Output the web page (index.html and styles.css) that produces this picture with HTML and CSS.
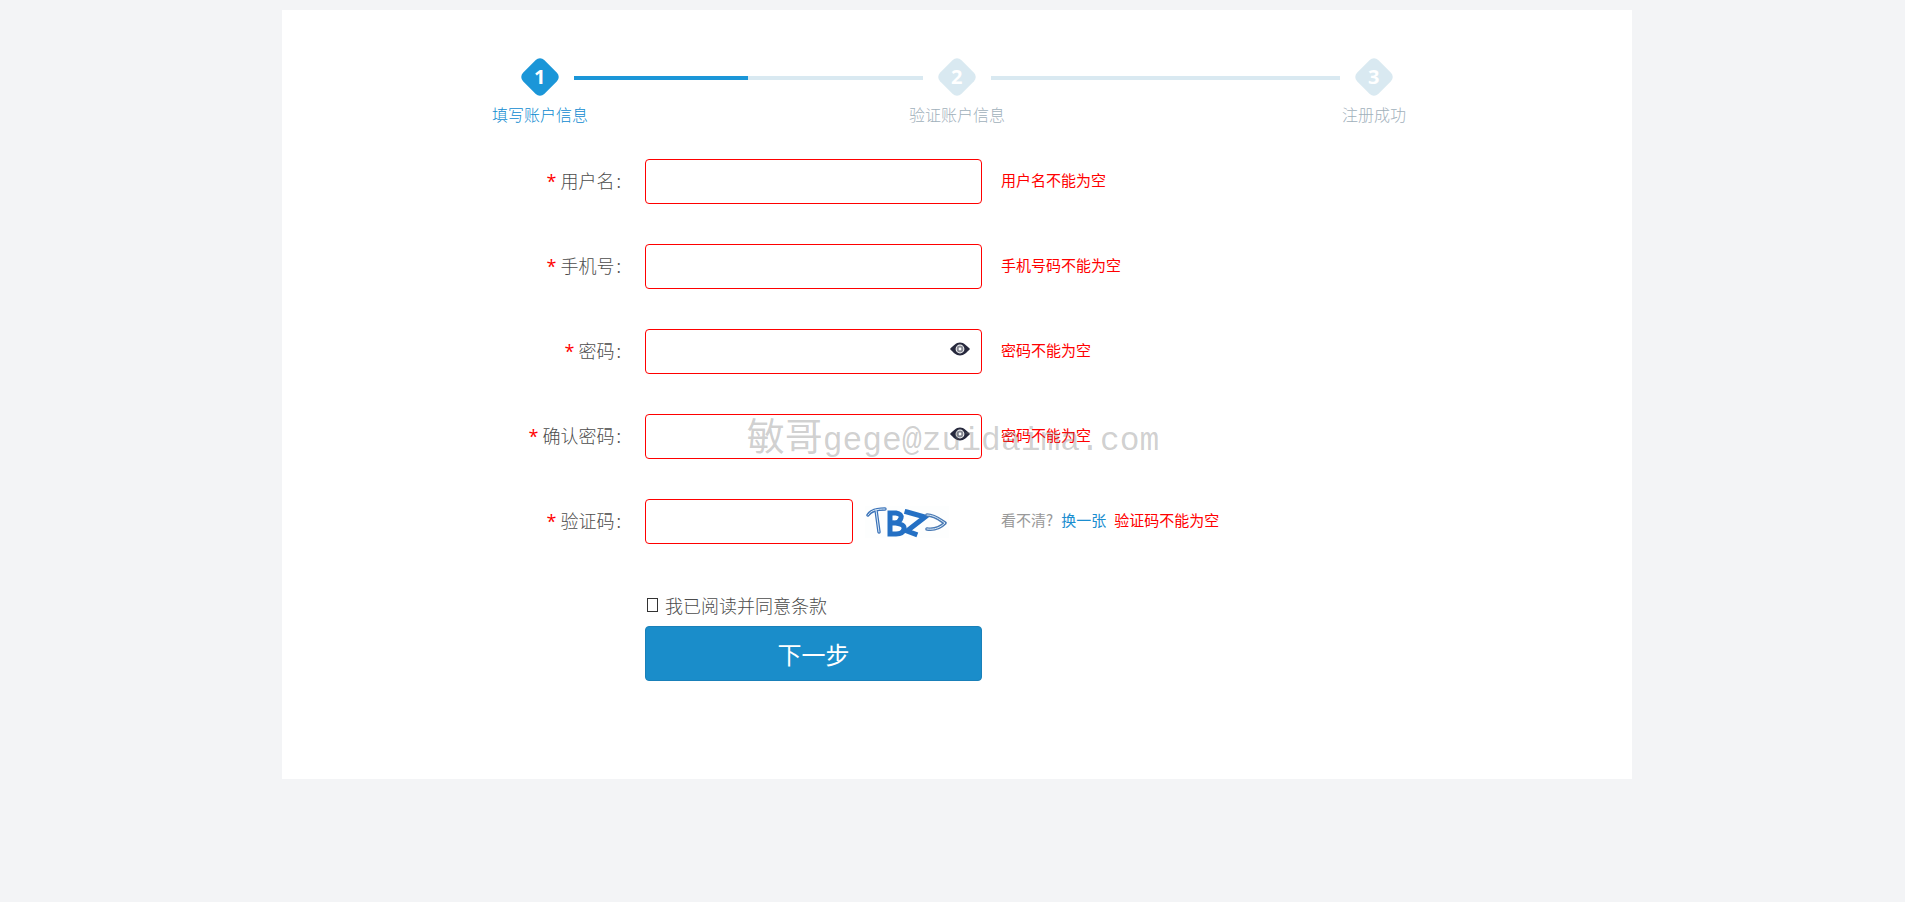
FILE: index.html
```html
<!DOCTYPE html>
<html lang="zh-CN">
<head>
<meta charset="utf-8">
<title>注册</title>
<link rel="stylesheet" href="styles.css">
</head>
<body>
<svg class="defs" aria-hidden="true">
  <symbol id="eye" viewBox="0 0 20 14">
    <path fill="#27293d" fill-rule="evenodd" d="M0 7C3 4 6 .5 10 .5S17 4 20 7C17 10 14 13.5 10 13.5S3 10 0 7ZM10 2.6a4.4 4.4 0 1 0 0 8.8 4.4 4.4 0 0 0 0-8.8Z"/>
    <path fill="#27293d" fill-rule="evenodd" d="M10 3.6a3.4 3.4 0 1 0 0 6.8 3.4 3.4 0 0 0 0-6.8ZM10 5.6a1.4 1.4 0 1 1 0 2.8 1.4 1.4 0 0 1 0-2.8Z" opacity=".55"/>
  </symbol>
</svg>
<main class="card">
  <ol class="steps">
    <li class="step active"><span class="badge"><span class="num">1</span></span><span class="step-label">填写账户信息</span></li>
    <li class="line half" aria-hidden="true"></li>
    <li class="step"><span class="badge"><span class="num">2</span></span><span class="step-label">验证账户信息</span></li>
    <li class="line" aria-hidden="true"></li>
    <li class="step"><span class="badge"><span class="num">3</span></span><span class="step-label">注册成功</span></li>
  </ol>
  <form class="form">
    <div class="row">
      <label class="label" for="user"><span class="star">*</span>用户名<span class="colon">:</span></label>
      <input class="input" id="user" type="text">
      <p class="tip"><span class="error">用户名不能为空</span></p>
    </div>
    <div class="row">
      <label class="label" for="phone"><span class="star">*</span>手机号<span class="colon">:</span></label>
      <input class="input" id="phone" type="tel">
      <p class="tip"><span class="error">手机号码不能为空</span></p>
    </div>
    <div class="row">
      <label class="label" for="pwd"><span class="star">*</span>密码<span class="colon">:</span></label>
      <div class="password">
        <input class="input" id="pwd" type="password">
        <button class="eye" type="button" aria-label="显示密码"><svg width="20" height="14"><use href="#eye"/></svg></button>
      </div>
      <p class="tip"><span class="error">密码不能为空</span></p>
    </div>
    <div class="row">
      <label class="label" for="pwd2"><span class="star">*</span>确认密码<span class="colon">:</span></label>
      <div class="password">
        <input class="input" id="pwd2" type="password">
        <button class="eye" type="button" aria-label="显示密码"><svg width="20" height="14"><use href="#eye"/></svg></button>
      </div>
      <p class="tip"><span class="error">密码不能为空</span></p>
    </div>
    <div class="row">
      <label class="label" for="code"><span class="star">*</span>验证码<span class="colon">:</span></label>
      <div class="captcha">
        <input class="input" id="code" type="text">
        <svg class="captcha-img" width="84" height="32" viewBox="0 0 84 32" role="img" aria-label="验证码">
          <rect width="84" height="32" fill="#fdfefe"/>
          <g fill="none" stroke-linecap="round" stroke-linejoin="round">
            <path d="M3 9C6 4 12 3 20 3M11 4L14 26" stroke="#3a72b8" stroke-width="3.4"/>
            <path d="M3 9C6 4 12 3 20 3M11 4L14 26" stroke="#dcebf8" stroke-width="1"/>
            <path d="M25 7V28M25 7H31Q37 8 36 12T30 17H25M30 17Q40 18 39 23T31 28H25" stroke="#2470c4" stroke-width="5" stroke-linecap="square"/>
            <path d="M42 6L60 11L42 25L50 28" stroke="#2470c4" stroke-width="5" stroke-linecap="square" stroke-linejoin="miter"/>
            <path d="M62 9C69 9 74 13 80 17C75 22 69 24 62 23" stroke="#4a7ab4" stroke-width="3.6"/>
            <path d="M62 9C69 9 74 13 80 17C75 22 69 24 62 23" stroke="#dcebf8" stroke-width="1"/>
          </g>
        </svg>
      </div>
      <p class="tip"><span class="hint">看不清?</span><a class="swap" href="#">换一张</a><span class="error">验证码不能为空</span></p>
    </div>
    <div class="row">
      <div class="submit">
        <div class="agree"><input class="check" id="agree" type="checkbox"><label for="agree">我已阅读并同意条款</label></div>
        <button class="next" type="submit">下一步</button>
      </div>
    </div>
  </form>
  <div class="watermark"><span class="wm-name">敏哥</span>gege@zuidaima.com</div>
</main>
</body>
</html>
```
FILE: styles.css
```css
* { box-sizing: border-box; }

body {
  margin: 0;
  padding: 10px 0 10px 9px;
  background: #f3f4f6;
  color: #4c4c4c;
  font: 300 18px/24px "Noto Sans CJK SC", sans-serif;
}

button, input { font: inherit; }

.defs { display: none; }

.card {
  position: relative;
  max-width: 1350px;
  margin: 0 auto;
  padding: 48px 0 98px;
  background: #fff;
}

.steps {
  display: flex;
  max-width: 902px;
  margin: 0 auto;
  padding: 0;
  list-style: none;
}

.step {
  display: flex;
  flex-direction: column;
  align-items: center;
  gap: 6px;
  width: 68px;
  color: #9fb0bb;
}

.badge {
  display: flex;
  align-items: center;
  justify-content: center;
  width: 30px;
  height: 30px;
  margin: 4px;
  border-radius: 6px;
  background: #d9e9f1;
  color: #fff;
  font: 700 20px/24px "Open Sans", sans-serif;
  transform: rotate(45deg);
}

.num { transform: rotate(-45deg); }

.step-label {
  font-size: 16px;
  line-height: 24px;
  white-space: nowrap;
}

.active { color: #0d8ad0; }
.active .badge { background: #1b96d8; }

.line {
  flex: 1;
  height: 4px;
  margin-top: 18px;
  background: #d9e9f1;
}

.half { background: linear-gradient(to right, #1b96d8 50%, #d9e9f1 50%); }

.form {
  display: grid;
  gap: 40px;
  margin-top: 33px;
}

.row {
  display: grid;
  grid-template-columns: 345px 337px 1fr;
  column-gap: 18px;
  align-items: center;
}

.label {
  padding: 0 6px 3px 0;
  text-align: right;
}

.star, .error { color: #f00; }

.star {
  margin-right: 4px;
  font-family: "Open Sans", sans-serif;
  font-weight: 400;
}

.colon { margin-left: 2px; }

.input {
  display: block;
  width: 100%;
  height: 45px;
  padding: 0 12px;
  border: 1px solid #f00;
  border-radius: 4px;
  background: #fff;
  outline: none;
}

.password { position: relative; }

.eye {
  position: absolute;
  top: 13px;
  right: 12px;
  display: flex;
  padding: 0;
  border: 0;
  background: none;
}

.captcha {
  display: flex;
  align-items: center;
  gap: 12px;
}

.captcha .input { width: 208px; }

.tip {
  display: flex;
  gap: 8px;
  margin: 0;
  padding: 0 0 3px 1px;
  font-size: 15px;
  font-weight: 400;
}

.hint { color: #999; }

.swap {
  color: #1b8ed0;
  text-decoration: none;
}

.submit { grid-column: 2; }

.agree {
  display: flex;
  align-items: center;
  gap: 7px;
  height: 42px;
}

.check {
  appearance: none;
  width: 11px;
  height: 14px;
  margin: 0 0 0 2px;
  border: 1px solid #333;
}

.next {
  display: block;
  width: 100%;
  height: 55px;
  border: 1px solid #1980b9;
  border-radius: 4px;
  background: #1a8dca;
  color: #fff;
  font-size: 24px;
  font-weight: 400;
}

.watermark {
  position: absolute;
  top: 406px;
  left: 0;
  right: 8px;
  color: rgba(110, 110, 110, .32);
  font: 400 33px/48px "Liberation Mono", "Noto Sans CJK SC", monospace;
  text-align: center;
  white-space: nowrap;
  pointer-events: none;
}

.wm-name { font-size: 38px; }
```
